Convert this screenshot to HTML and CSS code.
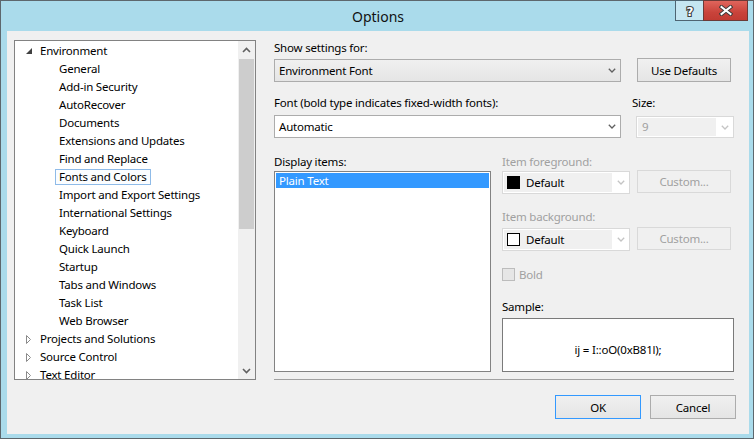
FILE: index.html
```html
<!DOCTYPE html>
<html>
<head>
<meta charset="utf-8">
<title>Options</title>
<link rel="stylesheet" href="styles.css">
</head>
<body>
<div class="window">
  <div class="titlebar">
    <div></div>
    <div class="title">Options</div>
    <div class="caption-btns">
      <div class="cbtn help">
        <svg width="12" height="14" viewBox="0 0 12 14"><text x="6" y="11.5" text-anchor="middle" class="qmark">?</text></svg>
      </div>
      <div class="cbtn close">
        <svg width="14" height="11" viewBox="0 0 14 11">
          <path d="M2.5 2 L11.5 9 M11.5 2 L2.5 9" stroke="#3a3a3a" stroke-width="4" stroke-linecap="square"/>
          <path d="M2.5 2 L11.5 9 M11.5 2 L2.5 9" stroke="#ffffff" stroke-width="2" stroke-linecap="square"/>
        </svg>
      </div>
    </div>
  </div>

  <div class="client">
    <div class="tree">
      <div class="tree-items">
        <div class="row l0"><span class="exp"><svg width="6" height="6" viewBox="0 0 6 6"><polygon points="6,0 6,6 0,6" fill="#404040"/></svg></span><span class="lbl">Environment</span></div>
        <div class="row l1"><span class="lbl">General</span></div>
        <div class="row l1"><span class="lbl">Add-in Security</span></div>
        <div class="row l1"><span class="lbl">AutoRecover</span></div>
        <div class="row l1"><span class="lbl">Documents</span></div>
        <div class="row l1"><span class="lbl">Extensions and Updates</span></div>
        <div class="row l1"><span class="lbl">Find and Replace</span></div>
        <div class="row l1"><span class="lbl sel">Fonts and Colors</span></div>
        <div class="row l1"><span class="lbl">Import and Export Settings</span></div>
        <div class="row l1"><span class="lbl">International Settings</span></div>
        <div class="row l1"><span class="lbl">Keyboard</span></div>
        <div class="row l1"><span class="lbl">Quick Launch</span></div>
        <div class="row l1"><span class="lbl">Startup</span></div>
        <div class="row l1"><span class="lbl">Tabs and Windows</span></div>
        <div class="row l1"><span class="lbl">Task List</span></div>
        <div class="row l1"><span class="lbl">Web Browser</span></div>
        <div class="row l0"><span class="exp"><svg width="6" height="9" viewBox="0 0 6 9"><polygon points="0.5,0.5 4.5,4.5 0.5,8.5" fill="none" stroke="#8a8a8a" stroke-width="1"/></svg></span><span class="lbl">Projects and Solutions</span></div>
        <div class="row l0"><span class="exp"><svg width="6" height="9" viewBox="0 0 6 9"><polygon points="0.5,0.5 4.5,4.5 0.5,8.5" fill="none" stroke="#8a8a8a" stroke-width="1"/></svg></span><span class="lbl">Source Control</span></div>
        <div class="row l0"><span class="exp"><svg width="6" height="9" viewBox="0 0 6 9"><polygon points="0.5,0.5 4.5,4.5 0.5,8.5" fill="none" stroke="#8a8a8a" stroke-width="1"/></svg></span><span class="lbl">Text Editor</span></div>
      </div>
      <div class="vscroll">
        <div class="sb-btn"><svg width="9" height="6" viewBox="0 0 9 6"><polyline points="1,5 4.5,1.5 8,5" fill="none" stroke="#606060" stroke-width="1.6"/></svg></div>
        <div class="sb-track"><div class="sb-thumb"></div></div>
        <div class="sb-btn"><svg width="9" height="6" viewBox="0 0 9 6"><polyline points="1,1 4.5,4.5 8,1" fill="none" stroke="#606060" stroke-width="1.6"/></svg></div>
      </div>
    </div>

    <div class="settings">
      <div class="lbl-line">Show settings for:</div>
      <div class="row-a">
        <div class="combo combo-env">
          <span class="combo-text">Environment Font</span>
          <span class="combo-arrow"><svg width="8" height="5" viewBox="0 0 8 5"><polyline points="0.8,0.8 4,4 7.2,0.8" fill="none" stroke="#606060" stroke-width="1.3"/></svg></span>
        </div>
        <div class="btn btn-defaults">Use Defaults</div>
      </div>

      <div class="lbl-line row-b-labels">
        <span class="font-lbl">Font (bold type indicates fixed-width fonts):</span>
        <span>Size:</span>
      </div>
      <div class="row-b">
        <div class="combo combo-font">
          <span class="combo-text">Automatic</span>
          <span class="combo-arrow"><svg width="8" height="5" viewBox="0 0 8 5"><polyline points="0.8,0.8 4,4 7.2,0.8" fill="none" stroke="#606060" stroke-width="1.3"/></svg></span>
        </div>
        <div class="combo combo-size">
          <span class="combo-field">9</span>
          <span class="combo-arrow"><svg width="8" height="5" viewBox="0 0 8 5"><polyline points="0.8,0.8 4,4 7.2,0.8" fill="none" stroke="#c4c4c4" stroke-width="1.3"/></svg></span>
        </div>
      </div>

      <div class="lower">
        <div class="col-items">
          <div class="lbl-line">Display items:</div>
          <div class="listbox">
            <div class="list-item selected">Plain Text</div>
          </div>
        </div>
        <div class="col-props">
          <div class="lbl-line disabled">Item foreground:</div>
          <div class="prop-row">
            <div class="combo combo-color">
              <span class="color-field"><span class="swatch black"></span><span>Default</span></span>
              <span class="combo-arrow"><svg width="8" height="5" viewBox="0 0 8 5"><polyline points="0.8,0.8 4,4 7.2,0.8" fill="none" stroke="#c4c4c4" stroke-width="1.3"/></svg></span>
            </div>
            <div class="btn btn-custom">Custom...</div>
          </div>

          <div class="lbl-line disabled bg-label">Item background:</div>
          <div class="prop-row prop-row-2">
            <div class="combo combo-color">
              <span class="color-field"><span class="swatch white"></span><span>Default</span></span>
              <span class="combo-arrow"><svg width="8" height="5" viewBox="0 0 8 5"><polyline points="0.8,0.8 4,4 7.2,0.8" fill="none" stroke="#c4c4c4" stroke-width="1.3"/></svg></span>
            </div>
            <div class="btn btn-custom">Custom...</div>
          </div>

          <div class="check-row">
            <span class="checkbox"></span>
            <span class="disabled">Bold</span>
          </div>

          <div class="lbl-line sample-label">Sample:</div>
          <div class="sample">ij = I::oO(0xB81l);</div>
        </div>
      </div>

      <div class="separator"></div>

      <div class="dialog-buttons">
        <div class="btn btn-ok">OK</div>
        <div class="btn btn-cancel">Cancel</div>
      </div>
    </div>
  </div>
</div>
</body>
</html>
```

FILE: styles.css
```css
* { box-sizing: border-box; }

body {
  margin: 0;
  font-family: "Noto Sans", "Open Sans", sans-serif;
  font-size: 11.5px;
  letter-spacing: -0.2px;
  color: #000;
  background: #ffffff;
}

.window {
  width: 754px;
  height: 439px;
  border: 1px solid #5d676d;
  background: #aadbeb;
  padding: 0 4px 4px 6px;
  display: flex;
  flex-direction: column;
}

/* Title bar */
.titlebar {
  height: 30px;
  flex: none;
  display: grid;
  grid-template-columns: 1fr auto 1fr;
}
.title {
  font-size: 14px;
  letter-spacing: 0;
  line-height: 32px;
  color: #111;
}
.caption-btns {
  justify-self: end;
  align-self: start;
  margin-top: -1px;
  margin-right: 1px;
  display: flex;
}
.cbtn {
  height: 21px;
  border: 1px solid #4e6572;
  display: flex;
  align-items: center;
  justify-content: center;
}
.cbtn.help {
  width: 28px;
  background: #c5e6f1;
  border-right: none;
}
.cbtn.close {
  width: 45px;
  background: linear-gradient(#e0655c, #c9433b 60%, #c13b33);
  border-color: #6b3a37;
}
.qmark {
  font-family: "DejaVu Sans", sans-serif;
  font-weight: bold;
  font-size: 12px;
  fill: #ffffff;
  stroke: #3c3c3c;
  stroke-width: 2.2px;
  paint-order: stroke;
}

/* Client area */
.client {
  flex: 1;
  background: #f0f0f0;
  padding: 9px 0 0 7px;
  display: flex;
  align-items: flex-start;
  gap: 18px;
}

/* Tree view */
.tree {
  width: 242px;
  height: 340px;
  border: 1px solid #828282;
  background: #fff;
  display: flex;
}
.tree-items {
  flex: 1;
  overflow: hidden;
  padding-top: 1px;
}
.row {
  height: 18px;
  display: flex;
  align-items: center;
  white-space: nowrap;
}
.row.l0 { padding-left: 11px; }
.row.l1 { padding-left: 40px; }
.exp {
  width: 6px;
  height: 9px;
  margin-right: 4px;
  display: flex;
  align-items: center;
}
.lbl {
  height: 16px;
  line-height: 14px;
  padding: 0 3px;
  border: 1px solid transparent;
}
.lbl.sel {
  border-color: #8fbbe8;
  background: #fbfdff;
}

.vscroll {
  width: 17px;
  background: #f0f0f0;
  display: flex;
  flex-direction: column;
}
.sb-btn {
  height: 17px;
  flex: none;
  display: flex;
  align-items: center;
  justify-content: center;
}
.sb-track {
  flex: 1;
  padding: 1px 1px 0 1px;
}
.sb-thumb {
  height: 170px;
  background: #cdcdcd;
}

/* Settings column */
.settings {
  width: 462px;
  display: flex;
  flex-direction: column;
}
.lbl-line {
  height: 16px;
  line-height: 16px;
  white-space: nowrap;
}
.disabled { color: #a0a0a0; }

.combo {
  display: flex;
  align-items: center;
  border: 1px solid #acacac;
  background: #fff;
}
.combo-text {
  flex: 1;
  padding-left: 4px;
}
.combo-arrow {
  width: 17px;
  flex: none;
  display: flex;
  align-items: center;
  justify-content: center;
}

.btn {
  display: flex;
  align-items: center;
  justify-content: center;
  border: 1px solid #acacac;
  background: linear-gradient(#f0f0f0, #e5e5e5);
}

.row-a {
  display: flex;
  margin-top: 2px;
}
.combo-env {
  width: 347px;
  height: 23px;
  margin-top: 1px;
  background: linear-gradient(#f0f0f0, #e5e5e5);
}
.btn-defaults {
  width: 94px;
  height: 24px;
  margin-left: 16px;
}

.row-b-labels {
  margin-top: 13px;
  display: flex;
}
.font-lbl { width: 358px; }

.row-b {
  display: flex;
  margin-top: 4px;
}
.combo-font {
  width: 347px;
  height: 23px;
}
.combo-size {
  width: 98px;
  height: 22px;
  margin-top: 1px;
  margin-left: 15px;
  border-color: #d9d9d9;
  padding: 1px 0 1px 1px;
}
.combo-size .combo-field {
  flex: 1;
  height: 100%;
  background: #f0f0f0;
  color: #a0a0a0;
  padding-left: 4px;
  line-height: 18px;
}

.lower {
  display: flex;
  gap: 11px;
  margin-top: 16px;
}
.col-items { width: 217px; }
.listbox {
  margin-top: 1px;
  height: 201px;
  border: 1px solid #828282;
  background: #fff;
  padding: 1px;
}
.list-item {
  height: 15px;
  line-height: 15px;
  padding-left: 3px;
}
.list-item.selected {
  background: #3399ff;
  color: #fff;
}

.col-props {
  width: 232px;
  display: flex;
  flex-direction: column;
}
.prop-row {
  display: flex;
  height: 24px;
}
.combo-color {
  width: 128px;
  height: 23px;
  margin-top: 1px;
  border-color: #d9d9d9;
  padding: 1px 0 1px 1px;
}
.color-field {
  flex: 1;
  height: 100%;
  background: #f0f0f0;
  display: flex;
  align-items: center;
  padding-left: 3px;
}
.swatch {
  width: 13px;
  height: 13px;
  margin-right: 6px;
  border: 1px solid #000;
}
.swatch.black { background: #000; }
.swatch.white { background: #fff; }

.btn-custom {
  width: 94px;
  height: 23px;
  margin-left: 7px;
  border-color: #d9d9d9;
  background: #f0f0f0;
  color: #a0a0a0;
}

.bg-label { margin-top: 15px; }
.prop-row-2 { margin-top: 2px; }

.check-row {
  margin-top: 17px;
  height: 13px;
  display: flex;
  align-items: center;
}
.checkbox {
  width: 13px;
  height: 13px;
  border: 1px solid #bcbcbc;
  background: #e6e6e6;
  margin-right: 4px;
}

.sample-label { margin-top: 18px; }
.sample {
  margin-top: 3px;
  height: 54px;
  border: 1px solid #7a7a7a;
  background: #fff;
  display: flex;
  align-items: center;
  justify-content: center;
  padding-top: 8px;
  white-space: nowrap;
}

.separator {
  margin-top: 7px;
  width: 460px;
  height: 1px;
  background: #a0a0a0;
}

.dialog-buttons {
  margin-top: 15px;
  display: flex;
  justify-content: flex-end;
  gap: 9px;
}
.btn-ok, .btn-cancel {
  width: 86px;
  height: 24px;
}
.btn-ok {
  border-color: #3399ff;
}
```
